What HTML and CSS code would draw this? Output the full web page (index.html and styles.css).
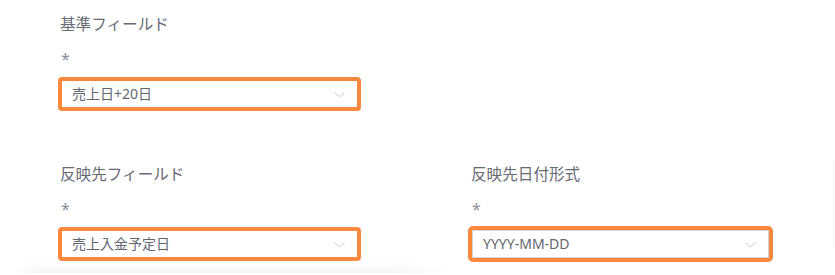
FILE: index.html
```html
<!DOCTYPE html>
<html lang="ja">
<head>
<meta charset="utf-8">
<link rel="stylesheet" href="styles.css">
</head>
<body>
<div class="page">
  <div class="form">
    <div class="row">
      <div class="field">
        <div class="label">基準フィールド</div>
        <div class="req">*</div>
        <div class="select mark">
          <span class="value">売上日+20日</span>
          <svg class="chev" width="11" height="6" viewBox="0 0 11 6"><polyline points="0.5,0.5 5.5,5 10.5,0.5" fill="none" stroke="#c8ccd4" stroke-width="1"/></svg>
        </div>
      </div>
    </div>
    <div class="row">
      <div class="field">
        <div class="label">反映先フィールド</div>
        <div class="req">*</div>
        <div class="select mark">
          <span class="value">売上入金予定日</span>
          <svg class="chev" width="11" height="6" viewBox="0 0 11 6"><polyline points="0.5,0.5 5.5,5 10.5,0.5" fill="none" stroke="#c8ccd4" stroke-width="1"/></svg>
        </div>
      </div>
      <div class="field">
        <div class="label">反映先日付形式</div>
        <div class="req">*</div>
        <div class="select mark mark-loose">
          <span class="value">YYYY-MM-DD</span>
          <svg class="chev" width="11" height="6" viewBox="0 0 11 6"><polyline points="0.5,0.5 5.5,5 10.5,0.5" fill="none" stroke="#c8ccd4" stroke-width="1"/></svg>
        </div>
      </div>
    </div>
  </div>
  <div class="edge"></div>
  <div class="shade"></div>
</div>
</body>
</html>
```

FILE: styles.css
```css
* { box-sizing: border-box; }
html, body {
  margin: 0;
  padding: 0;
  background: #ffffff;
  overflow: hidden;
}
body {
  font-family: "Noto Sans", "Noto Sans CJK JP", sans-serif;
  color: #606266;
  width: 835px;
  height: 275px;
}
.page {
  position: relative;
  height: 275px;
  overflow: hidden;
}
.form {
  padding: 12px 0 0 60px;
  display: flex;
  flex-direction: column;
}
.row {
  display: flex;
  height: 150px;
}
.row + .row {
  height: auto;
}
.field {
  flex: 0 0 411px;
  width: 411px;
  display: flex;
  flex-direction: column;
}
.label {
  font-size: 15.6px;
  line-height: 24px;
  color: #666a73;
}
.req {
  margin-top: 14px;
  font-size: 16px;
  line-height: 18px;
  height: 18px;
  color: #8a8f99;
  padding-left: 1px;
}
.select {
  margin-top: 12px;
  margin-left: 1px;
  width: 297px;
  height: 28px;
  border: 1px solid #dcdfe6;
  border-radius: 2px;
  padding: 0 12px 0 10px;
  display: flex;
  align-items: center;
  justify-content: space-between;
  background: #fff;
}
.value {
  font-size: 14px;
  line-height: 20px;
  color: #62666e;
}
.chev {
  display: block;
  margin-top: 2px;
}
.mark {
  outline: 4px solid #f7883c;
  outline-offset: -1px;
  border-radius: 1px;
}
.mark-loose {
  outline-offset: 0px;
  border-color: #d2d5dc;
}
.edge {
  position: absolute;
  left: 833px;
  top: 160px;
  width: 1px;
  height: 88px;
  background: #f1f2f4;
}
.shade {
  margin: 3px 0 0 13px;
  width: 440px;
  height: 12px;
  background: linear-gradient(to bottom, #ffffff, #f4f4f4);
  -webkit-mask-image: linear-gradient(to right, transparent, #000 6%, #000 85%, transparent);
  mask-image: linear-gradient(to right, transparent, #000 6%, #000 85%, transparent);
}
```
